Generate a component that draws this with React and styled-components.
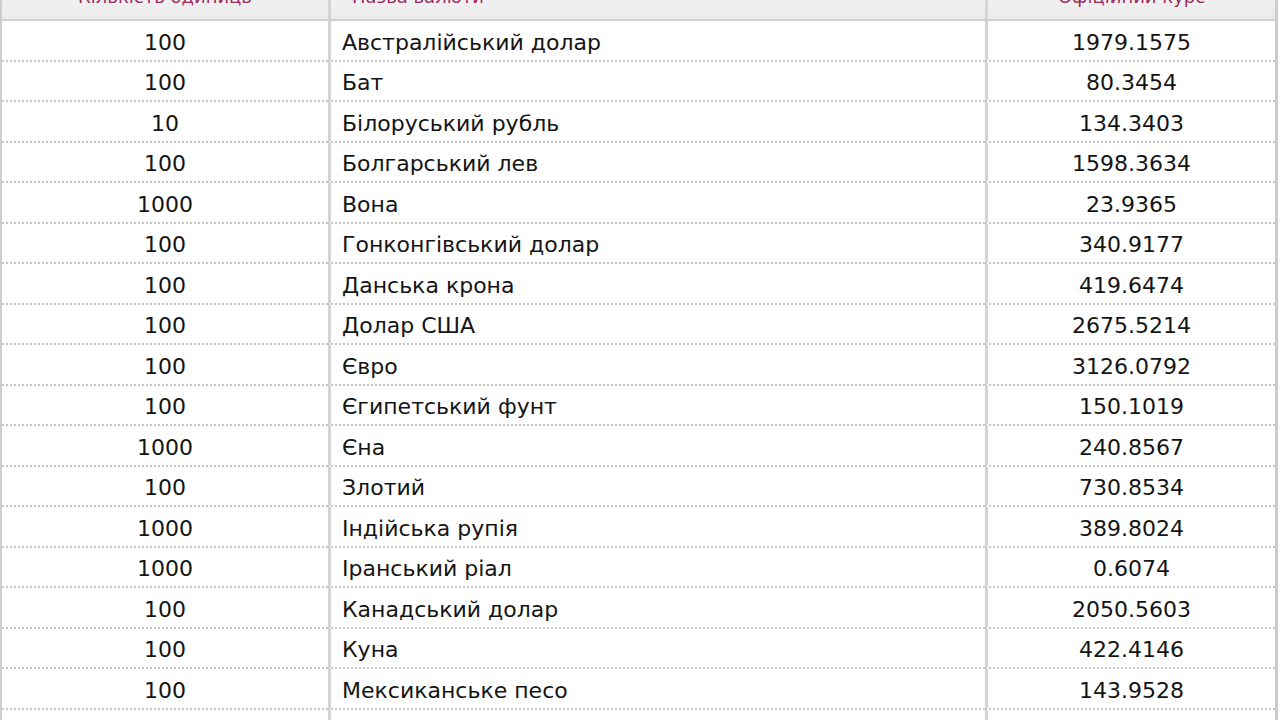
import React from "react";
import styled, { createGlobalStyle } from "styled-components";

const GlobalStyle = createGlobalStyle`
  html, body {
    margin: 0;
    padding: 0;
    background: #ffffff;
  }
  body {
    font-family: "DejaVu Sans", Verdana, sans-serif;
    overflow: hidden;
  }
`;

const Viewport = styled.div`
  width: 1280px;
  height: 720px;
  overflow: hidden;
`;

const Table = styled.table`
  width: 1278px;
  margin-top: -27px;
  border-collapse: separate;
  border-spacing: 0;
  table-layout: fixed;
  border-left: 2px solid #cdcdcd;
  border-right: 3px solid #cdcdcd;
  font-size: 22px;
  color: #141414;
`;

const HeadCell = styled.th`
  height: 46px;
  padding: 0 ${(p) => (p.$align === "left" ? "21px" : "0")};
  background: linear-gradient(#f8f8f8, #ebebeb);
  border-bottom: 2px solid #cfcfcf;
  border-left: ${(p) => (p.$first ? "none" : "3px solid #d4d4d4")};
  color: #9c2c5c;
  font-size: 18px;
  font-weight: normal;
  text-align: ${(p) => p.$align || "center"};
  white-space: nowrap;
`;

const Cell = styled.td`
  height: 40.5px;
  box-sizing: border-box;
  padding: 4px ${(p) => (p.$align === "left" ? "11px" : "0")} 0;
  border-bottom: 2px dotted #c4c4c4;
  border-left: ${(p) => (p.$first ? "none" : "3px solid #d4d4d4")};
  text-align: ${(p) => p.$align || "center"};
  white-space: nowrap;
  vertical-align: middle;
`;

const rates = [
  ["100", "Австралійський долар", "1979.1575"],
  ["100", "Бат", "80.3454"],
  ["10", "Білоруський рубль", "134.3403"],
  ["100", "Болгарський лев", "1598.3634"],
  ["1000", "Вона", "23.9365"],
  ["100", "Гонконгівський долар", "340.9177"],
  ["100", "Данська крона", "419.6474"],
  ["100", "Долар США", "2675.5214"],
  ["100", "Євро", "3126.0792"],
  ["100", "Єгипетський фунт", "150.1019"],
  ["1000", "Єна", "240.8567"],
  ["100", "Злотий", "730.8534"],
  ["1000", "Індійська рупія", "389.8024"],
  ["1000", "Іранський ріал", "0.6074"],
  ["100", "Канадський долар", "2050.5603"],
  ["100", "Куна", "422.4146"],
  ["100", "Мексиканське песо", "143.9528"],
  ["100", "Молдовський лей", "158.7311"],
  ["100", "Новий ізраїльський шекель", "735.2268"],
];

export default function App() {
  return (
    <Viewport>
      <GlobalStyle />
      <Table>
        <colgroup>
          <col style={{ width: "326px" }} />
          <col style={{ width: "657px" }} />
          <col />
        </colgroup>
        <thead>
          <tr>
            <HeadCell $first>Кількість одиниць</HeadCell>
            <HeadCell $align="left">Назва валюти</HeadCell>
            <HeadCell>Офіційний курс</HeadCell>
          </tr>
        </thead>
        <tbody>
          {rates.map(([units, name, rate]) => (
            <tr key={name}>
              <Cell $first>{units}</Cell>
              <Cell $align="left">{name}</Cell>
              <Cell>{rate}</Cell>
            </tr>
          ))}
        </tbody>
      </Table>
    </Viewport>
  );
}
